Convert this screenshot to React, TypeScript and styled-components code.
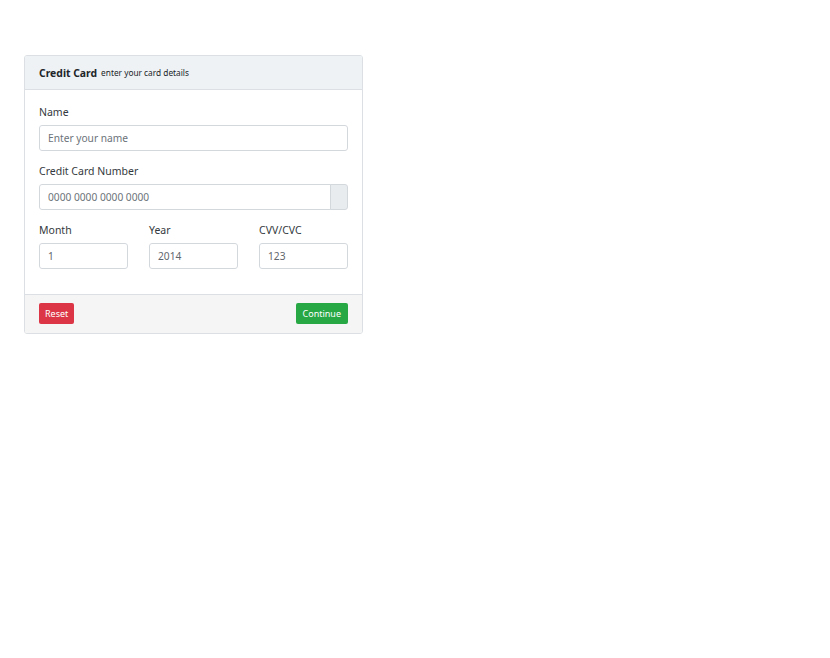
import React from "react";
import styled, { createGlobalStyle } from "styled-components";

const GlobalStyle = createGlobalStyle`
  body {
    margin: 0;
    background: #ffffff;
    font-family: "Noto Sans", "Open Sans", sans-serif;
    color: #212529;
  }
`;

const Page = styled.div`
  padding: 55px 0 0 24px;
`;

const Card = styled.div`
  width: 337px;
  border: 1px solid #dcdfe3;
  border-radius: 3px;
  background: #ffffff;
  overflow: hidden;
`;

const CardHeader = styled.div`
  height: 33px;
  display: flex;
  align-items: center;
  padding: 0 14px;
  background: #eff2f5;
  border-bottom: 1px solid #dcdfe3;
  gap: 4px;
`;

const Title = styled.strong`
  font-size: 10.4px;
  font-weight: 700;
  color: #212529;
`;

const Subtitle = styled.small`
  font-size: 8.3px;
  color: #212529;
`;

const CardBody = styled.div`
  padding: 14px 14px 13px 14px;
`;

const Group = styled.div`
  margin-bottom: 12px;
`;

const Label = styled.label`
  display: block;
  font-size: 10.5px;
  line-height: 17px;
  margin-bottom: 4px;
  color: #343a40;
`;

const Row = styled.div`
  display: grid;
  grid-template-columns: repeat(3, 89px);
  justify-content: space-between;
`;

const InputGroup = styled.div`
  display: flex;
`;

const Input = styled.input<{ $joined?: boolean }>`
  box-sizing: border-box;
  width: 100%;
  height: 26px;
  padding: 0 8px;
  border: 1px solid #d3d8dd;
  border-radius: ${(p) => (p.$joined ? "3px 0 0 3px" : "3px")};
  font-family: "Noto Sans", "Open Sans", sans-serif;
  font-size: 10.2px;
  color: #5f666d;
  background: #ffffff;
  outline: none;

  &::placeholder {
    color: #6c737a;
  }
`;

const Addon = styled.span`
  flex: 0 0 18px;
  height: 26px;
  box-sizing: border-box;
  background: #e9ecef;
  border: 1px solid #d3d8dd;
  border-radius: 0 3px 3px 0;
  margin-left: -1px;
`;

const CardFooter = styled.div`
  display: flex;
  justify-content: space-between;
  align-items: center;
  padding: 8px 14px 9px 14px;
  background: #f5f5f5;
  border-top: 1px solid #dcdfe3;
`;

const Button = styled.button<{ $variant: "danger" | "success" }>`
  height: 21px;
  padding: 0 ${(p) => (p.$variant === "danger" ? "6px" : "7px")};
  border: none;
  border-radius: 2px;
  font-family: "Noto Sans", "Open Sans", sans-serif;
  font-size: 9px;
  color: #ffffff;
  background: ${(p) => (p.$variant === "danger" ? "#dc3545" : "#28a745")};
  cursor: pointer;
`;

export default function App() {
  return (
    <>
      <GlobalStyle />
      <Page>
        <Card>
          <CardHeader>
            <Title>Credit Card</Title>
            <Subtitle>enter your card details</Subtitle>
          </CardHeader>
          <CardBody>
            <Group>
              <Label>Name</Label>
              <Input placeholder="Enter your name" />
            </Group>
            <Group>
              <Label>Credit Card Number</Label>
              <InputGroup>
                <Input $joined placeholder="0000 0000 0000 0000" />
                <Addon />
              </InputGroup>
            </Group>
            <Row>
              <Group>
                <Label>Month</Label>
                <Input defaultValue="1" />
              </Group>
              <Group>
                <Label>Year</Label>
                <Input defaultValue="2014" />
              </Group>
              <Group>
                <Label>CVV/CVC</Label>
                <Input defaultValue="123" />
              </Group>
            </Row>
          </CardBody>
          <CardFooter>
            <Button $variant="danger">Reset</Button>
            <Button $variant="success">Continue</Button>
          </CardFooter>
        </Card>
      </Page>
    </>
  );
}
